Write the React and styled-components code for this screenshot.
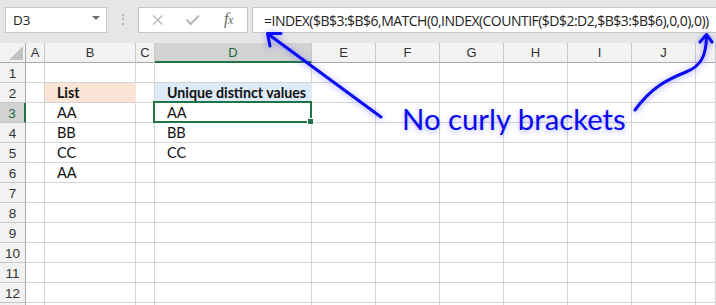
import React from "react";
import styled, { createGlobalStyle } from "styled-components";

const Global = createGlobalStyle`
  html, body { margin: 0; padding: 0; background: #fff; }
  body { width: 716px; height: 305px; overflow: hidden; }
`;

const Page = styled.div`
  position: relative;
  width: 716px;
  height: 305px;
  overflow: hidden;
  font-family: Lato, "Noto Sans", sans-serif;
`;

const Toolbar = styled.div`
  height: 43px;
  background: #e6e6e6;
  display: flex;
  align-items: flex-start;
  padding-top: 7px;
  box-sizing: border-box;
`;

const Box = styled.div`
  height: 26px;
  box-sizing: border-box;
  background: #fff;
  border: 1px solid #c6c6c6;
  display: flex;
  align-items: center;
`;

const NameBox = styled(Box)`
  margin-left: 5px;
  width: 102px;
  padding: 0 6px 0 7px;
  justify-content: space-between;
  font-family: "Open Sans", "Noto Sans", sans-serif;
  font-size: 13.5px;
  color: #222;
`;

const Caret = styled.span`
  width: 0;
  height: 0;
  border-left: 4px solid transparent;
  border-right: 4px solid transparent;
  border-top: 4px solid #6d6d6d;
  margin-top: -4px;
`;

const Grip = styled.div`
  width: 31px;
  height: 26px;
  display: flex;
  flex-direction: column;
  align-items: center;
  justify-content: center;
  gap: 2.5px;
  padding-bottom: 2px;
  box-sizing: border-box;
  span {
    width: 2px;
    height: 2px;
    background: #b4b4b4;
  }
`;

const FxBox = styled(Box)`
  width: 110px;
  padding-left: 13px;
  gap: 0;
`;

const FxLabel = styled.span`
  font-family: "Liberation Serif", serif;
  font-style: italic;
  color: #666;
  font-size: 16px;
  margin-left: 23px;
  margin-top: -2px;
  letter-spacing: -0.5px;
  small { font-size: 12px; }
`;

const FormulaBox = styled(Box)`
  margin-left: 4px;
  flex: 1;
  border-right: none;
  padding-left: 11px;
  font-family: "Open Sans", "Noto Sans", sans-serif;
  font-size: 14px;
  letter-spacing: -0.52px;
  color: #222;
  white-space: nowrap;
  overflow: hidden;
`;

const Sheet = styled.div`
  display: grid;
  grid-template-columns: 26px 19px 91px 19px 157px repeat(6, 64px) 1fr;
  grid-auto-rows: 20px;
`;

const ColHead = styled.div`
  box-sizing: border-box;
  background: ${(p) => (p.$active ? "#d2d2d2" : "#f2f2f2")};
  border-right: 1px solid #c8c8c8;
  border-bottom: ${(p) => (p.$active ? "2px solid #217346" : "1px solid #ababab")};
  display: flex;
  align-items: center;
  justify-content: center;
  font-family: "Liberation Sans", Arial, sans-serif;
  font-size: 13px;
  color: ${(p) => (p.$active ? "#1e6b41" : "#333")};
  padding-top: ${(p) => (p.$active ? "1px" : "0")};
`;

const Corner = styled(ColHead)`
  position: relative;
  border-right: 1px solid #ababab;
  svg { position: absolute; right: 2px; bottom: 2px; }
`;

const RowHead = styled.div`
  box-sizing: border-box;
  background: ${(p) => (p.$active ? "#d2d2d2" : "#f2f2f2")};
  border-right: ${(p) => (p.$active ? "2px solid #217346" : "1px solid #ababab")};
  border-bottom: 1px solid #c8c8c8;
  display: flex;
  align-items: center;
  justify-content: center;
  font-family: "Liberation Sans", Arial, sans-serif;
  font-size: 13.5px;
  color: ${(p) => (p.$active ? "#1e6b41" : "#333")};
  padding-top: 1px;
`;

const Cell = styled.div`
  position: relative;
  box-sizing: border-box;
  border-right: 1px solid ${(p) => p.$fill || "#d4d4d4"};
  border-bottom: 1px solid #d4d4d4;
  background: ${(p) => p.$fill || "#fff"};
  display: flex;
  align-items: flex-end;
  padding: 0 0 1px 12px;
  font-size: ${(p) => (p.$bold ? "14.2px" : "14.5px")};
  line-height: 17px;
  font-weight: ${(p) => (p.$bold ? 700 : 400)};
  color: #111;
  white-space: nowrap;
  ${(p) =>
    p.$selected &&
    `
    &::after {
      content: "";
      position: absolute;
      left: -2px; top: -2px; right: -1px; bottom: -1px;
      border: 2px solid #217346;
      z-index: 2;
    }
    &::before {
      content: "";
      position: absolute;
      right: -3px; bottom: -3px;
      width: 5px; height: 5px;
      background: #217346;
      border: 1px solid #fff;
      z-index: 3;
    }
  `}
`;

const Overlay = styled.svg`
  position: absolute;
  left: 0;
  top: 0;
  pointer-events: none;
  z-index: 5;
  filter: drop-shadow(0 1px 3px rgba(70, 70, 255, 0.55));
`;

const Note = styled.div`
  position: absolute;
  left: 402px;
  top: 104px;
  z-index: 5;
  font-family: Lato, "Noto Sans", sans-serif;
  font-size: 29.3px;
  line-height: 29px;
  color: #0a0af0;
  white-space: nowrap;
  text-shadow: 0 2px 5px rgba(90, 90, 255, 0.45);
`;

const cols = ["A", "B", "C", "D", "E", "F", "G", "H", "I", "J", ""];
const colKeys = ["A", "B", "C", "D", "E", "F", "G", "H", "I", "J", "K"];

const data = {
  2: { B: { t: "List", bold: true, fill: "#fce4d6" }, D: { t: "Unique distinct values", bold: true, fill: "#ddebf7" } },
  3: { B: { t: "AA" }, D: { t: "AA", selected: true } },
  4: { B: { t: "BB" }, D: { t: "BB" } },
  5: { B: { t: "CC" }, D: { t: "CC" } },
  6: { B: { t: "AA" } },
};

export default function App() {
  const rows = Array.from({ length: 13 }, (_, i) => i + 1);
  return (
    <Page>
      <Global />
      <Toolbar>
        <NameBox>
          <span>D3</span>
          <Caret />
        </NameBox>
        <Grip>
          <span />
          <span />
          <span />
        </Grip>
        <FxBox>
          <svg width="12" height="12" viewBox="0 0 12 12">
            <path d="M1 1.5 L10.5 10.5 M10.5 1.5 L1 10.5" stroke="#b8b8b8" strokeWidth="1.4" fill="none" />
          </svg>
          <svg width="16" height="12" viewBox="0 0 16 12" style={{ marginLeft: 21 }}>
            <path d="M1.5 5.5 L5.5 10 L14 1.5" stroke="#b8b8b8" strokeWidth="2" fill="none" />
          </svg>
          <FxLabel>
            f<small>x</small>
          </FxLabel>
        </FxBox>
        <FormulaBox>=INDEX($B$3:$B$6,MATCH(0,INDEX(COUNTIF($D$2:D2,$B$3:$B$6),0,0),0))</FormulaBox>
      </Toolbar>
      <Sheet>
        <Corner>
          <svg width="14" height="14" viewBox="0 0 14 14">
            <polygon points="14,0 14,14 0,14" fill="#c2c2c2" />
          </svg>
        </Corner>
        {cols.map((c, i) => (
          <ColHead key={colKeys[i]} $active={c === "D"}>
            {c}
          </ColHead>
        ))}
        {rows.map((r) => (
          <React.Fragment key={r}>
            <RowHead $active={r === 3}>{r < 13 ? r : ""}</RowHead>
            {colKeys.map((k) => {
              const d = (data[r] || {})[k];
              return (
                <Cell key={k} $fill={d && d.fill} $bold={d && d.bold} $selected={d && d.selected}>
                  {d ? d.t : ""}
                </Cell>
              );
            })}
          </React.Fragment>
        ))}
      </Sheet>
      <Overlay width="716" height="305" viewBox="0 0 716 305">
        <g stroke="#0a0af5" strokeWidth="3" fill="none" strokeLinecap="round" strokeLinejoin="round">
          <path d="M381 117 L268 34" />
          <path d="M281 33.5 L267.5 33.5 L270 46" />
          <path d="M635 110 C651 88 666 80 686 72 C701 66 706 56 706.5 37" />
          <path d="M700 42 L706.5 34.5 L712 42" />
        </g>
      </Overlay>
      <Note>No curly brackets</Note>
    </Page>
  );
}
